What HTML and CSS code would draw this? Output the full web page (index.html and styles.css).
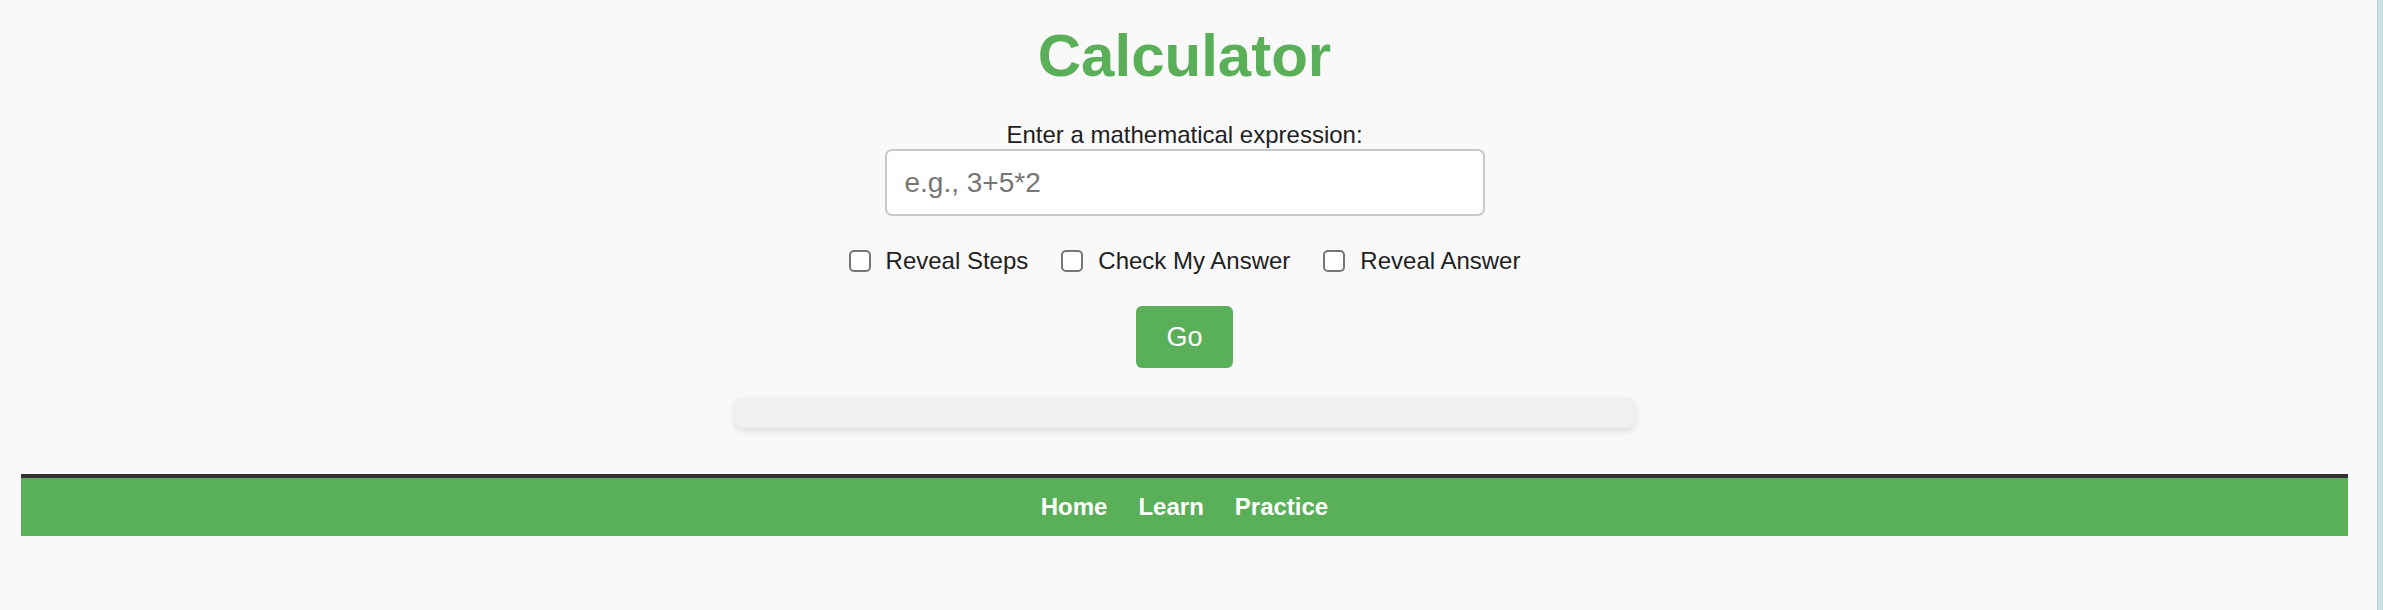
FILE: index.html
```html
<!DOCTYPE html>
<html lang="en">
<head>
<meta charset="utf-8">
<title>Calculator</title>
<link rel="stylesheet" href="styles.css">
</head>
<body>
<div class="window">
  <div class="page">
    <main class="calc">
      <h1 class="title">Calculator</h1>
      <label class="prompt" for="expr">Enter a mathematical expression:</label>
      <input class="expr" id="expr" type="text" placeholder="e.g., 3+5*2">
      <div class="options">
        <label class="opt"><input type="checkbox" class="box">Reveal Steps</label>
        <label class="opt"><input type="checkbox" class="box">Check My Answer</label>
        <label class="opt"><input type="checkbox" class="box">Reveal Answer</label>
      </div>
      <button class="go" type="button">Go</button>
      <div class="result"></div>
    </main>
    <footer class="footer">
      <nav class="nav">
        <a class="nav-link" href="#">Home</a>
        <a class="nav-link" href="#">Learn</a>
        <a class="nav-link" href="#">Practice</a>
      </nav>
    </footer>
  </div>
  <div class="edge"></div>
</div>
</body>
</html>
```
FILE: styles.css
```css
html, body {
  margin: 0;
  padding: 0;
  height: 100%;
}
body {
  background: #f9f9f9;
  font-family: "Liberation Sans", Arial, sans-serif;
  color: #222;
}
.window {
  display: flex;
  height: 610px;
}
.page {
  flex: 1;
  padding: 0 29px 0 21px;
}
.edge {
  width: 5px;
  background: #cbdfe6;
  border-left: 1px solid #b8cfd8;
}
.calc {
  display: flex;
  flex-direction: column;
  align-items: center;
}
.title {
  margin: 21px 0 0;
  font-size: 60px;
  line-height: 69px;
  font-weight: bold;
  color: #5aaf59;
}
.prompt {
  margin-top: 31px;
  font-size: 24px;
  line-height: 28px;
  color: #222;
}
.expr {
  box-sizing: border-box;
  width: 600px;
  height: 67px;
  margin: 0;
  padding: 0 18px;
  border: 2px solid #c8c8c8;
  border-radius: 7px;
  background: #fff;
  font-family: "Liberation Sans", Arial, sans-serif;
  font-size: 28px;
  color: #222;
  outline: none;
}
.expr::placeholder {
  color: #767676;
}
.options {
  display: flex;
  margin-top: 31px;
  gap: 33px;
  height: 28px;
  align-items: center;
}
.opt {
  display: flex;
  align-items: center;
  font-size: 24px;
  line-height: 28px;
  color: #222;
}
.box {
  appearance: none;
  -webkit-appearance: none;
  box-sizing: border-box;
  width: 22px;
  height: 22px;
  margin: 0 15px 0 0;
  border: 2px solid #767676;
  border-radius: 5px;
  background: #fff;
}
.go {
  margin-top: 31px;
  padding: 15px 30px;
  border: none;
  border-radius: 6px;
  background: #5aaf59;
  color: #fff;
  font-family: "Liberation Sans", Arial, sans-serif;
  font-size: 27px;
  line-height: 32px;
}
.result {
  box-sizing: border-box;
  width: 900px;
  height: 30px;
  margin-top: 30px;
  border-radius: 8px;
  background: #f0f0f0;
  box-shadow: 0 3px 7px rgba(0, 0, 0, 0.12);
}
.footer {
  margin-top: 46px;
  border-top: 4px solid #333;
  background: #5aaf59;
  height: 58px;
  display: flex;
  align-items: center;
  justify-content: center;
}
.nav {
  display: flex;
  gap: 31px;
}
.nav-link {
  color: #fff;
  font-weight: bold;
  font-size: 24px;
  text-decoration: none;
}
```
